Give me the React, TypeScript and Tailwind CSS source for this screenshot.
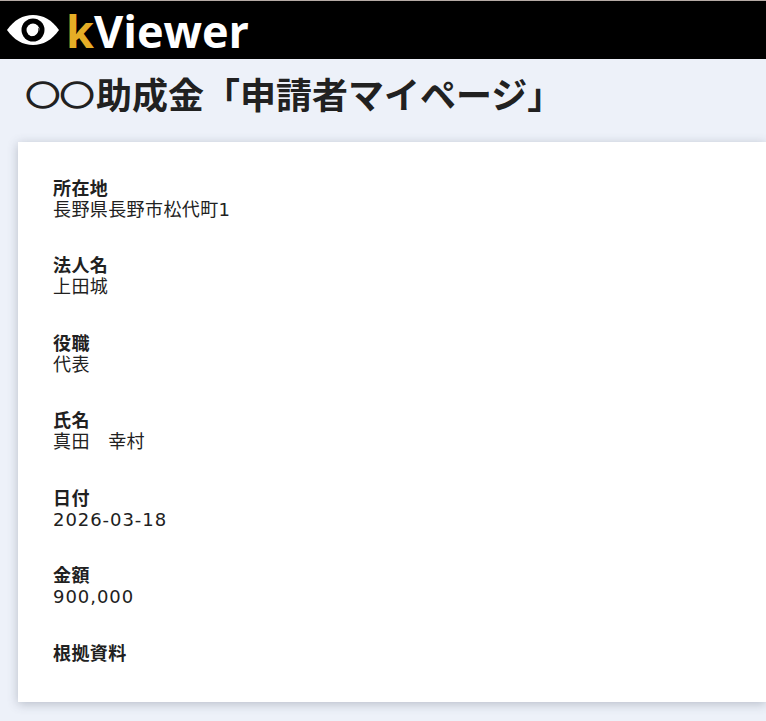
const fields = [
  { label: "所在地", value: "長野県長野市松代町1" },
  { label: "法人名", value: "上田城" },
  { label: "役職", value: "代表" },
  { label: "氏名", value: "真田　幸村" },
  { label: "日付", value: "2026-03-18", numeric: true },
  { label: "金額", value: "900,000", numeric: true },
  { label: "根拠資料", value: "" },
];

function EyeLogo() {
  return (
    <svg width="52" height="30" viewBox="0 0 52 30" aria-hidden="true">
      <path fill="#fff" d="M0 15C7 5 16 0 26 0s19 5 26 15c-7 10-16 15-26 15S7 25 0 15Z" />
      <circle cx="26" cy="15" r="11.500" fill="#000" />
      <circle cx="26" cy="15" r="6.500" fill="#fff" />
      <path fill="#000" d="M31 12.500a6.500 6.500 0 0 1-7.500 8.500 5.500 5.500 0 0 0 7.500-8.500Z" />
    </svg>
  );
}

export default function App() {
  return (
    <div className="min-h-[721px] overflow-hidden bg-[#edf1f9] font-['DejaVu_Sans','Noto_Sans_CJK_JP',sans-serif] text-[#212121]">
      {/* Header */}
      <header className="flex h-[59px] items-center border-t border-[#b5aaa5] bg-black pl-[7px]">
        <EyeLogo />
        <span className="ml-[7px] font-['Open_Sans',sans-serif] text-[45px] leading-none font-bold text-white">
          <span className="text-[#e5ad26]">k</span>Viewer
        </span>
      </header>

      <h1 className="pt-[12px] pl-[24px] font-['Noto_Sans_CJK_JP',sans-serif] text-[36px] leading-[44px] font-bold">
        <span className="inline-block scale-x-[0.95] scale-y-[0.8] [-webkit-text-stroke:2px_#212121]">○○</span>
        助成金「申請者マイページ」
      </h1>

      {/* Card */}
      <main className="mt-[27px] ml-[18px] h-[560px] bg-white px-[35px] pt-[35.5px] shadow-[0_2px_10px_rgba(60,70,90,0.3)]">
        {fields.map((f) => (
          <div key={f.label} className="mb-[35.5px] text-[18px] leading-[21px] tracking-[0.4px]">
            <div className="font-bold">{f.label}</div>
            {f.value && <div className={f.numeric ? "tracking-[0.95px]" : ""}>{f.value}</div>}
          </div>
        ))}
      </main>
    </div>
  );
}
